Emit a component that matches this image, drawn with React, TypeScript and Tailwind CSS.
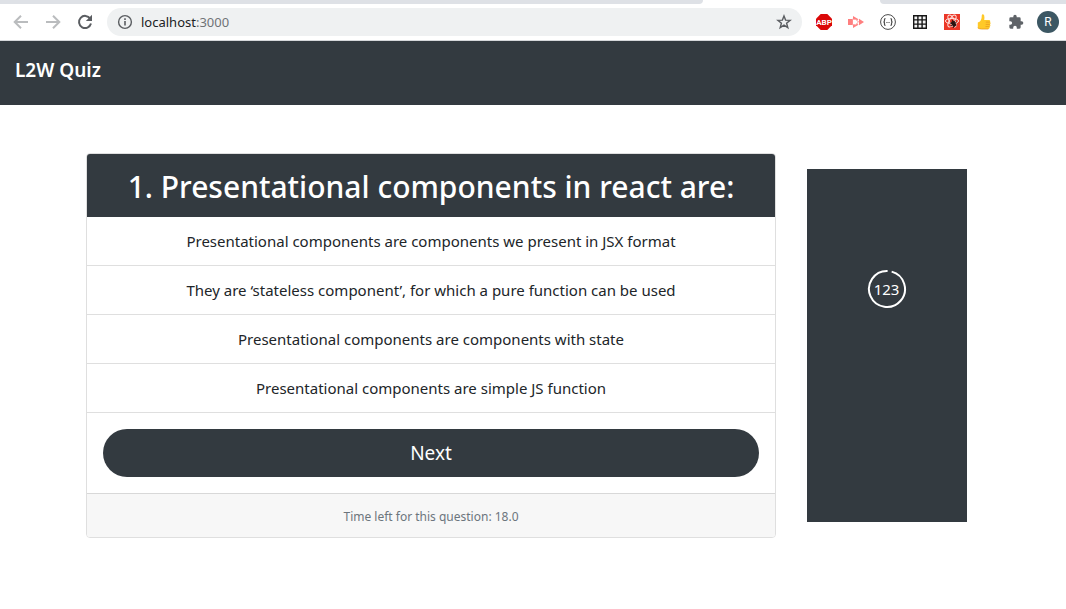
import React, { useState } from "react";

const answers = [
  "Presentational components are components we present in JSX format",
  "They are ‘stateless component’, for which a pure function can be used",
  "Presentational components are components with state",
  "Presentational components are simple JS function",
];

function IconButton({ label, children }: { label: string; children: React.ReactNode }) {
  return (
    <button type="button" aria-label={label} className="flex h-8 w-8 shrink-0 items-center justify-center">
      {children}
    </button>
  );
}

function Toolbar() {
  return (
    <div className="flex h-9 items-center bg-white pl-[5px] pr-0.5">
      <IconButton label="Back">
        <svg viewBox="0 0 16 16" className="h-4 w-4" fill="none" stroke="#babcbe" strokeWidth="2">
          <path d="M15 8H2.5M8 1.7 1.7 8 8 14.3" />
        </svg>
      </IconButton>
      <IconButton label="Forward">
        <svg viewBox="0 0 16 16" className="h-4 w-4" fill="none" stroke="#babcbe" strokeWidth="2">
          <path d="M1 8h12.5M8 1.7 14.3 8 8 14.3" />
        </svg>
      </IconButton>
      <IconButton label="Reload">
        <svg viewBox="0 0 16 16" className="h-4 w-4">
          <path d="M13.2 4.6A6.1 6.1 0 1 0 14 9.6" fill="none" stroke="#5a5d61" strokeWidth="2" />
          <path d="M15 .8V7H8.8Z" fill="#5a5d61" />
        </svg>
      </IconButton>
      <div className="ml-1.5 mr-1.5 flex h-7 min-w-0 flex-1 items-center rounded-full bg-[#eff1f2] pl-2.5 pr-2.5">
        <svg viewBox="0 0 16 16" className="h-4 w-4 shrink-0" fill="none" stroke="#5a5d61">
          <circle cx="8" cy="8" r="6.4" strokeWidth="1.4" />
          <path d="M8 7v4.4M8 4.3v1.7" strokeWidth="1.6" />
        </svg>
        <p className="ml-2 flex-1 font-['Noto_Sans',sans-serif] text-[13px] leading-5 text-[#202124]">
          localhost<span className="text-[#6f7377]">:3000</span>
        </p>
        <button type="button" aria-label="Bookmark this page">
          <svg viewBox="0 0 16 16" className="h-4 w-4" fill="none" stroke="#5a5d61" strokeWidth="1.4">
            <path d="m8 2 1.6 4.1 4.5.3-3.5 2.8 1.2 4.4L8 11.1l-3.8 2.5 1.2-4.4-3.5-2.8 4.5-.3Z" />
          </svg>
        </button>
      </div>
      <IconButton label="Ad blocker">
        <svg viewBox="0 0 16 16" className="h-4 w-4">
          <path d="M4.7 0h6.6L16 4.7v6.6L11.3 16H4.7L0 11.3V4.7Z" fill="#db0808" />
          <text x="8" y="11" textAnchor="middle" fill="#fff" fontSize="8" fontWeight="700" fontFamily="Roboto, sans-serif">ABP</text>
        </svg>
      </IconButton>
      <IconButton label="Screen recorder">
        <svg viewBox="0 0 16 16" className="h-4 w-4">
          <path d="M0 5h4v6H0ZM11 4.800 16 8l-5 3.200Z" fill="#ff7f7f" />
          <path d="M5 5V2l5.500 3.200L9 6.300 7.500 5ZM5 11v3l5.500-3.200L9 9.700 7.500 11Z" fill="#ff7f7f" />
          <path d="M4.500 5.200h3.200L10.500 8l-2.800 2.800H4.500Z" fill="none" stroke="#ff8f8f" />
        </svg>
      </IconButton>
      <IconButton label="JSON viewer">
        <svg viewBox="0 0 16 16" className="h-4 w-4" fill="none" stroke="#4b4b4b">
          <circle cx="8" cy="8" r="7.4" strokeWidth="1" />
          <path d="M5.5 4.6c-1.2 0-1 .7-1 1.8S4.300 8 3.400 8c.9 0 1.100.5 1.100 1.600s-.2 1.800 1 1.800M10.500 4.600c1.200 0 1 .7 1 1.800s.2 1.600 1.100 1.600c-.9 0-1.100.5-1.100 1.600s.2 1.800-1 1.800" strokeWidth="1.200" />
          <path d="M6.400 8.500h3.200" strokeDasharray=".8 .4" strokeWidth="1" />
        </svg>
      </IconButton>
      <IconButton label="Grid">
        <svg viewBox="0 0 14 14" className="h-3.5 w-3.5">
          <path d="M0 0h14v14H0Z" fill="#161616" />
          <path d="M1.400 1.400h2.800v2.800H1.400zm4.200 0h2.800v2.800H5.600zm4.200 0h2.800v2.800H9.800zM1.400 5.600h2.800v2.800H1.400zm4.200 0h2.800v2.800H5.600zm4.200 0h2.800v2.800H9.800zM1.400 9.800h2.800v2.800H1.400zm4.200 0h2.800v2.800H5.600zm4.200 0h2.800v2.800H9.800z" fill="#f4f4f4" />
        </svg>
      </IconButton>
      <IconButton label="React developer tools">
        <svg viewBox="0 0 16 16" className="h-4 w-4">
          <path d="M0 0h16v16H0Z" fill="#eb3626" />
          <g fill="none" stroke="#ffe3df" strokeWidth="1">
            <ellipse cx="8" cy="7" rx="6.600" ry="2.600" />
            <ellipse cx="8" cy="7" rx="6.600" ry="2.600" transform="rotate(60 8 7)" />
            <ellipse cx="8" cy="7" rx="6.600" ry="2.600" transform="rotate(120 8 7)" />
          </g>
          <ellipse cx="9.600" cy="9.800" rx="2" ry="3" fill="#26120f" transform="rotate(-30 9.600 9.800)" />
          <path d="m6 9 6.500 2M6.500 12l6-3.800M8 6l1.500 2M11 6.500 10 8M9 14l1-2" stroke="#26120f" strokeWidth="1" />
        </svg>
      </IconButton>
      <IconButton label="Thumbs up">
        <svg viewBox="0 0 16 16" className="h-4 w-4">
          <path d="M1.800 8.500c1.800-.5 2.800-1.500 3.400-3.300.6-1.500.4-2.800.6-4C6 0 7.700.1 8.200 1.500c.4 1.500.3 3 0 4.400h4.900c1.200 0 1.600 1.600.8 2.200 1 .5.900 1.900.1 2.300.7.700.4 1.900-.4 2.200.4.900-.1 2.400-1.300 2.400H5.500c-1.700 0-2.700-.500-3.700-1.100Z" fill="#ffc928" />
          <path d="M9.800 8.100h4M9.700 10.400h4.100M9.500 12.600h4M1.800 13.900c1 .6 2.300 1.100 3.700 1.100h6.800" fill="none" stroke="#e89b20" strokeWidth=".8" />
        </svg>
      </IconButton>
      <IconButton label="Extensions">
        <svg viewBox="0 0 24 24" className="h-4 w-4" fill="#5f6368">
          <path d="M20.500 11H19V7a2 2 0 0 0-2-2h-4V3.500a2.500 2.500 0 0 0-5 0V5H4a2 2 0 0 0-2 2v3.800h1.500a2.700 2.700 0 0 1 0 5.400H2V20a2 2 0 0 0 2 2h3.800v-1.500a2.700 2.700 0 0 1 5.400 0V22H17a2 2 0 0 0 2-2v-4h1.500a2.500 2.500 0 0 0 0-5Z" />
        </svg>
      </IconButton>
      <IconButton label="Profile">
        <span className="flex h-[22px] w-[22px] items-center justify-center rounded-full bg-[#3c5763] font-[Roboto,sans-serif] text-xs text-white">
          R
        </span>
      </IconButton>
    </div>
  );
}

export default function App() {
  const [, setSelected] = useState<number | null>(null);

  return (
    <div className="bg-white font-['Noto_Sans',sans-serif] text-[#212529]">
      <div className="border-b border-[#d5d7da]">
        <div className="flex h-1">
          <div className="flex-1 rounded-br bg-[#dee1e6]" />
          <div className="w-[177px]" />
          <div className="w-[186px] rounded-bl bg-[#dee1e6]" />
        </div>
        <Toolbar />
      </div>

      <header className="h-16 bg-[#333a40] px-[15px] pt-[15px]">
        <a href="#" className="text-[19px] font-semibold leading-7 text-white">
          L2W Quiz
        </a>
      </header>

      <main className="flex gap-[31px] pb-16 pl-[86px] pr-[99px] pt-12">
        <section className="min-w-0 flex-1 overflow-hidden rounded border border-[#dfdfdf] text-center">
          <h1 className="bg-[#333a40] pb-[11px] pt-[13px] text-[30px] font-medium leading-[39px] text-white">
            1. Presentational components in react are:
          </h1>
          <ul>
            {answers.map((answer, index) => (
              <li key={answer} className="border-b border-[#dfdfdf]">
                <button
                  type="button"
                  onClick={() => setSelected(index)}
                  className="h-12 w-full text-[15px] leading-6"
                >
                  {answer}
                </button>
              </li>
            ))}
          </ul>
          <div className="p-4">
            <button type="button" className="h-12 w-full rounded-full bg-[#333a40] text-[19px] leading-7 text-white">
              Next
            </button>
          </div>
          <footer className="border-t border-[#d8d8d8] bg-[#f7f7f7] pb-[11px] pt-[13px] text-xs leading-[19px] text-[#6c757d]">
            Time left for this question: 18.0
          </footer>
        </section>

        <aside className="my-4 flex w-40 shrink-0 justify-center bg-[#333a40] pt-[100px]">
          <svg viewBox="0 0 40 40" className="h-10 w-10" role="img" aria-label="123 seconds left">
            <path d="M24.660 2.610A18 18 0 1 1 20.600 2" fill="none" stroke="#fff" strokeWidth="2" />
            <text x="19.500" y="25.500" textAnchor="middle" fill="#fff" fontSize="15">
              123
            </text>
          </svg>
        </aside>
      </main>
    </div>
  );
}
